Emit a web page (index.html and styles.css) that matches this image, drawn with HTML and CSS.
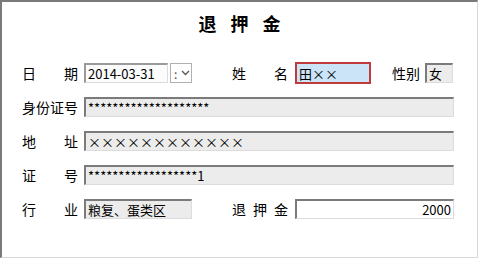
FILE: index.html
```html
<!DOCTYPE html>
<html>
<head>
    <title>退押金</title>
    <link rel="stylesheet" href="styles.css">
</head>
<body>
    <div class="frame">
        <h1 class="title">退 押 金</h1>

        <div class="row">
            <span class="label">日期</span>
            <input class="field date" value="2014-03-31">
            <span class="picker">:<svg width="9" height="6" viewBox="0 0 9 6"><path d="M1 1 L4.5 4.5 L8 1" fill="none" stroke="#555" stroke-width="1.3"/></svg></span>
            <span class="label label-right">姓名</span>
            <input class="field name" value="田××">
            <span class="label-small">性别</span>
            <input class="field gender" value="女">
        </div>

        <div class="row">
            <span class="label">身份证号</span>
            <input class="field wide" value="********************">
        </div>

        <div class="row">
            <span class="label">地址</span>
            <input class="field wide" value="××××××××××××">
        </div>

        <div class="row">
            <span class="label">证号</span>
            <input class="field wide" value="******************1">
        </div>

        <div class="row">
            <span class="label">行业</span>
            <input class="field trade" value="粮复、蛋类区">
            <span class="label label-right">退押金</span>
            <input class="field amount" value="2000">
        </div>
    </div>
</body>
</html>
```

FILE: styles.css
```css
html,
body {
    margin: 0;
    padding: 0;
    background: #fff;
    font-family: "Noto Sans CJK SC", "DejaVu Sans", sans-serif;
    color: #000;
}
.frame {
    width: 455px;
    height: 255px;
    border-top: 2px solid #7a7a7a;
    border-left: 2px solid #7a7a7a;
    border-right: 1px solid #d8d8d8;
    border-bottom: 1px solid #d8d8d8;
    padding: 0 0 0 20px;
}
.title {
    margin: 0 0 0 -20px;
    padding-top: 10px;
    height: 51px;
    font-size: 18px;
    font-weight: bold;
    line-height: 22px;
    letter-spacing: 5px;
    text-indent: 5px;
    text-align: center;
}
.row {
    display: flex;
    align-items: center;
    height: 20px;
    margin-bottom: 14px;
}
.label {
    width: 56px;
    font-size: 14px;
    line-height: 20px;
    text-align: justify;
    text-align-last: justify;
    margin-right: 6px;
}
.label-right {
    margin-left: 40px;
    margin-right: 7px;
}
.label-small {
    font-size: 14px;
    margin-left: 21px;
    margin-right: 5px;
}
.field {
    height: 20px;
    box-sizing: border-box;
    font-family: "Noto Sans CJK SC", "DejaVu Sans", sans-serif;
    font-size: 13px;
    padding: 0 2px;
    margin: 0;
    border-top: 2px solid #7b7b7b;
    border-left: 2px solid #7b7b7b;
    border-right: 1px solid #dcdcdc;
    border-bottom: 1px solid #dcdcdc;
    background: #ececec;
    color: #000;
    outline: none;
}
.date {
    width: 84px;
    background: #fcfcfc;
    border-top-color: #9a9a9a;
    border-left-color: #9a9a9a;
}
.picker {
    display: flex;
    align-items: center;
    gap: 4px;
    width: 22px;
    height: 20px;
    box-sizing: border-box;
    margin-left: 2px;
    padding-left: 3px;
    border: 1px solid #b0b0b0;
    font-size: 12px;
    color: #444;
}
.name {
    width: 76px;
    height: 22px;
    border: 2px solid #c0393b;
    background: #cce4f7;
}
.gender {
    width: 28px;
}
.wide {
    width: 370px;
}
.trade {
    width: 108px;
}
.amount {
    width: 159px;
    background: #fff;
    text-align: right;
}
```
